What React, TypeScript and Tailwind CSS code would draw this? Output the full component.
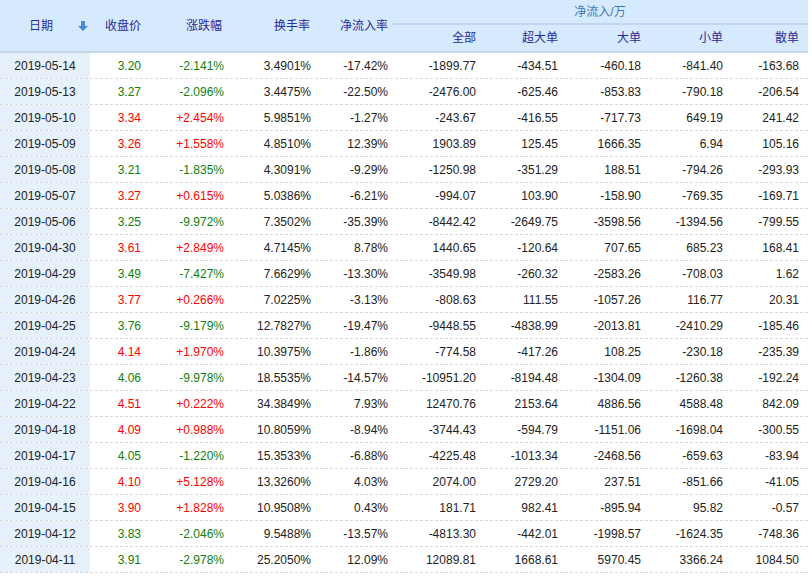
const rows: string[][] = `2019-05-14 3.20 -2.141% 3.4901% -17.42% -1899.77 -434.51 -460.18 -841.40 -163.68
2019-05-13 3.27 -2.096% 3.4475% -22.50% -2476.00 -625.46 -853.83 -790.18 -206.54
2019-05-10 3.34 +2.454% 5.9851% -1.27% -243.67 -416.55 -717.73 649.19 241.42
2019-05-09 3.26 +1.558% 4.8510% 12.39% 1903.89 125.45 1666.35 6.94 105.16
2019-05-08 3.21 -1.835% 4.3091% -9.29% -1250.98 -351.29 188.51 -794.26 -293.93
2019-05-07 3.27 +0.615% 5.0386% -6.21% -994.07 103.90 -158.90 -769.35 -169.71
2019-05-06 3.25 -9.972% 7.3502% -35.39% -8442.42 -2649.75 -3598.56 -1394.56 -799.55
2019-04-30 3.61 +2.849% 4.7145% 8.78% 1440.65 -120.64 707.65 685.23 168.41
2019-04-29 3.49 -7.427% 7.6629% -13.30% -3549.98 -260.32 -2583.26 -708.03 1.62
2019-04-26 3.77 +0.266% 7.0225% -3.13% -808.63 111.55 -1057.26 116.77 20.31
2019-04-25 3.76 -9.179% 12.7827% -19.47% -9448.55 -4838.99 -2013.81 -2410.29 -185.46
2019-04-24 4.14 +1.970% 10.3975% -1.86% -774.58 -417.26 108.25 -230.18 -235.39
2019-04-23 4.06 -9.978% 18.5535% -14.57% -10951.20 -8194.48 -1304.09 -1260.38 -192.24
2019-04-22 4.51 +0.222% 34.3849% 7.93% 12470.76 2153.64 4886.56 4588.48 842.09
2019-04-18 4.09 +0.988% 10.8059% -8.94% -3744.43 -594.79 -1151.06 -1698.04 -300.55
2019-04-17 4.05 -1.220% 15.3533% -6.88% -4225.48 -1013.34 -2468.56 -659.63 -83.94
2019-04-16 4.10 +5.128% 13.3260% 4.03% 2074.00 2729.20 237.51 -851.66 -41.05
2019-04-15 3.90 +1.828% 10.9508% 0.43% 181.71 982.41 -895.94 95.82 -0.57
2019-04-12 3.83 -2.046% 9.5488% -13.57% -4813.30 -442.01 -1998.57 -1624.35 -748.36
2019-04-11 3.91 -2.978% 25.2050% 12.09% 12089.81 1668.61 5970.45 3366.24 1084.50`
  .split("\n").map((l) => l.split(" "));

const W = ["w-[90px]", "w-[55px]", "w-[83px]", "w-[87px]", "w-[77px]", "w-[88px]", "w-[82px]", "w-[83px]", "w-[82px]", "w-[76px]"];

export default function App() {
  return (
    <div className="w-[812px] h-[577px] bg-white overflow-hidden text-[12px]" style={{ fontFamily: '"Liberation Sans", "Noto Sans CJK SC", sans-serif' }}>
      <div className="w-[808px]">
        <div className="flex h-[53px] bg-[#d5eafc] border-b-2 border-[#c3d7ea] text-[#2a2a9a]">
          <div className={`${W[0]} flex items-center justify-center relative`}>
            <span className="mr-[8px]">日期</span>
            <svg className="absolute right-[2px] top-[21px]" width="10" height="10" viewBox="0 0 10 10"><path d="M3 0h4v5h3L5 10 0 5h3z" fill="#4a8ad8" /></svg>
          </div>
          <div className={`${W[1]} flex items-center justify-end pr-[4px]`}>收盘价</div>
          <div className={`${W[2]} flex items-center justify-end pr-[6px]`}>涨跌幅</div>
          <div className={`${W[3]} flex items-center justify-end pr-[5px]`}>换手率</div>
          <div className={`${W[4]} flex items-center justify-end pr-[4px]`}>净流入率</div>
          <div className="flex-1 flex flex-col">
            <div className="h-[25px] border-b-2 border-[#c3d7ea] flex items-center justify-center text-[#3a7ab0]">净流入/万</div>
            <div className="flex flex-1">
              {["全部", "超大单", "大单", "小单", "散单"].map((h, i) => (
                <div key={h} className={`${W[i + 5]} flex items-center justify-end pr-[4px]`}>{h}</div>
              ))}
            </div>
          </div>
        </div>
        {rows.map((r) => (
          <div key={r[0]} className="flex h-[26px] border-b border-dashed border-[#d8d8d8] text-[#222]">
            {r.map((c, i) => {
              const up = r[2].startsWith("+");
              const color = i === 1 || i === 2 ? (up ? "text-[#ff0000]" : "text-[#108010]") : "";
              const bg = i === 0 ? "bg-[#e6f1fb] justify-center" : "justify-end pr-[4px]";
              return (
                <div key={i} className={`${W[i]} flex items-center ${bg} ${color}`}>{c}</div>
              );
            })}
          </div>
        ))}
      </div>
    </div>
  );
}
